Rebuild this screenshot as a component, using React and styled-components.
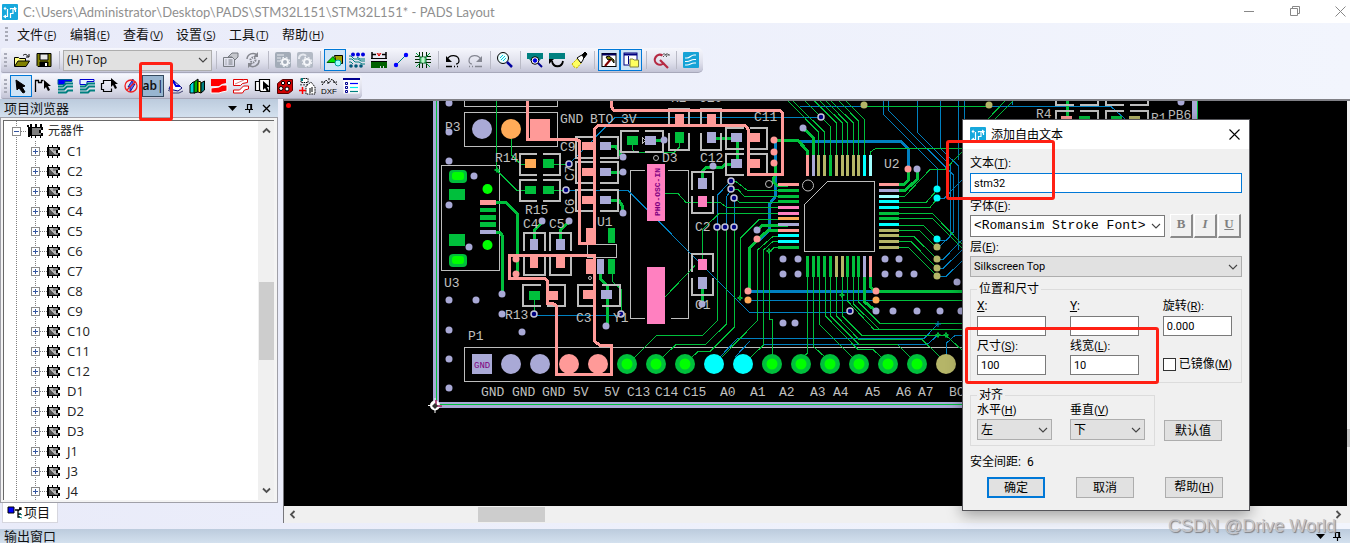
import React from "react";
import styled, { createGlobalStyle, css } from "styled-components";

const UI = `"Open Sans", "Noto Sans CJK SC", sans-serif`;
const DLG = `Roboto, "Noto Sans CJK SC", sans-serif`;

const Global = createGlobalStyle`
  * { box-sizing: border-box; }
  html, body { margin: 0; height: 100%; overflow: hidden; }
  body { font-family: ${UI}; color: #111; background: #ebeefa; }
  button, input, select { font: inherit; color: inherit; margin: 0; }
`;

const C = {
  green: "#00bf3c", lime: "#00ff00", lav: "#a9a9d6", pink: "#ff9a98", orange: "#ffab58",
  cyan: "#00ffff", ice: "#a0ffff", olive: "#b5b568", blue: "#0080c0", silk: "#bdbdbd",
  hot: "#ff80c0", purple: "#800080",
};

/* ---------- shell ---------- */
const App_ = styled.div`
  position: relative; display: flex; flex-direction: column;
  height: 100vh; min-width: 0; overflow: hidden;
  background: linear-gradient(90deg, #e9ebf9, #f2f5fd);
`;
const TitleBar = styled.header`
  flex: none; display: flex; align-items: center; height: 23px; background: #fff; padding: 0 0 0 2px;
`;
const TitleText = styled.h1`
  flex: 1; margin: 0 0 0 5px; font-family: Lato, sans-serif; font-size: 13px; line-height: 20px; font-weight: 400; color: #8f8f8f; white-space: nowrap;
`;
const WinButtons = styled.div`display: flex; gap: 26px; padding-right: 1px;`;
const Bare = styled.button`
  display: inline-flex; align-items: center; justify-content: center; padding: 0; border: 0; background: none;
  width: ${(p) => p.$w || 20}px; height: ${(p) => p.$h || 20}px;
`;
const MenuBar = styled.nav`
  flex: none; display: flex; align-items: center; height: 25px; padding: 0 0 3px 2px;
`;
const MenuItem = styled.button`
  border: 0; background: none; padding: 0; width: 53px; text-align: left; font-size: 13px; line-height: 20px; white-space: nowrap;
`;
const Key = styled.span`font-size: 11px; margin-left: 1px;`;
const Grip = styled.span`
  flex: none; width: 3px; height: 15px; margin: 0 ${(p) => p.$gap || 0}px 0 3px;
  background: repeating-linear-gradient(180deg, #a9abb8 0 2px, transparent 2px 4px);
`;
const ToolBar = styled.div`
  flex: none; align-self: flex-start; display: flex; align-items: center; height: 25px; margin-left: 1px;
  margin-bottom: ${(p) => p.$mb || 0}px; padding-right: ${(p) => p.$pr || 0}px;
  border-radius: 2px 5px 5px 2px; border-bottom: 1px solid #a7a8ba;
  background: linear-gradient(180deg, #f6f7fd, #dfe0ec 60%, #c3c4d6);
`;
const ToolBtn = styled.button`
  flex: none; display: flex; align-items: center; justify-content: center; width: 22px; height: 22px; padding: 0;
  border: 1px solid transparent; background: none;
  ${(p) => p.$on && css`border-color: #0078d7; background: #cfe4f6;`}
  ${(p) => p.$down && css`border-color: #35495e; background: #98b5d0;`}
`;
const Sep = styled.span`flex: none; width: 1px; height: 18px; margin: 0 3px 0 4px; background: #b9bac6;`;
const SelectBox = styled.span`
  position: relative; display: block; flex: none; width: ${(p) => p.$w || "100%"};
  > svg { position: absolute; right: 4px; top: 50%; margin-top: -3px; pointer-events: none; }
`;
const Select = styled.select`
  display: block; width: 100%; height: ${(p) => p.$h || 21}px; padding: 0 16px 0 3px; appearance: none; border-radius: 0;
  border: 1px solid ${(p) => (p.$white ? "#7a7a7a" : "#adadad")}; background: ${(p) => (p.$white ? "#fff" : "#e1e1e1")};
  font-size: ${(p) => p.$fs || 12}px; line-height: 18px; font-family: ${(p) => p.$ff || "inherit"}; outline: 0;
`;

/* ---------- work area ---------- */
const Work = styled.main`flex: 1; min-height: 0; display: flex; gap: 5px;`;
const Side = styled.aside`flex: none; width: 278px; display: flex; flex-direction: column; padding-bottom: 6px;`;
const PanelHead = styled.div`
  flex: none; display: flex; align-items: center; height: ${(p) => p.$h || 18}px; padding: 0 4px;
  background: linear-gradient(180deg, #bccbdd, #d3e0ee); overflow: hidden;
`;
const PanelTitle = styled.h2`flex: 1; margin: 0; font-size: 13px; line-height: 14px; font-weight: 400;`;
const TreeFrame = styled.div`
  flex: 1; min-height: 0; display: flex; padding: 2px 3px 2px 2px; border: 1px solid #a0a0a8; background: #f4f4f4;
`;
const TreeInner = styled.div`
  flex: 1; min-height: 0; display: flex; border-top: 1px solid #696969; border-left: 1px solid #696969; background: #fff;
`;
const Tree = styled.ul`
  flex: 1; min-height: 0; overflow: hidden; margin: 0; padding: 0 0 0 5px; list-style: none; font-size: 12px;
`;
const Row = styled.li`display: flex; align-items: center; height: 20px; color: #222;`;
const Caption = styled.span`margin-left: ${(p) => p.$ml}px; line-height: 18px; font-size: ${(p) => p.$fs}px;`;
const Expander = styled.button`display: block; border: 0; padding: 0; background: none; height: 20px;`;
const VScroll = styled.div`
  flex: none; width: 16px; display: flex; flex-direction: column; justify-content: space-between; align-items: center;
  background: #f0f0f0; padding: 5px 0 5px;
`;
const VThumb = styled.div`width: 15px; height: 78px; margin-top: 20px; background: #cdcdcd;`;
const Tab = styled.button`
  align-self: flex-start; display: flex; align-items: center; gap: 1px; height: 20px; margin: 0 0 0 2px; padding: 0 7px 2px 4px;
  border: 1px solid #d6d6de; border-top: 0; background: #fff; font-size: 13px; line-height: 16px;
`;
const CanvasPane = styled.section`
  flex: 1; min-width: 0; display: flex; flex-direction: column; margin-bottom: 6px;
  border-top: 2px solid #808086; border-left: 1px solid #77777c;
`;
const CanvasRow = styled.div`flex: 1; min-height: 0; display: flex; background: #f0f0f0;`;
const BoardView = styled.div`flex: 1; min-width: 0; overflow: hidden; background: #000; > svg { display: block; }`;
const EdgeScroll = styled.div`
  flex: none; width: 3px; padding-top: 328px; background: #f0f0f0; &::before { content: ""; display: block; height: 18px; background: #c8c8c8; }
`;
const HScroll = styled.div`
  flex: none; height: 17px; display: flex; align-items: center; justify-content: space-between; padding: 0 7px 0 4px; background: #f0f0f0;
`;
const HTrack = styled.div`flex: 1; padding-left: 181px; > div { width: 67px; height: 15px; background: #cdcdcd; }`;

/* ---------- dialog ---------- */
const Dialog = styled.div`
  position: absolute; left: 962px; top: 119px; width: 288px; border: 1px solid #55555a; background: #f0f0f0;
  box-shadow: 0 4px 14px rgba(0,0,0,.35); font-family: ${DLG}; font-size: 12px; line-height: 14px; color: #000;
`;
const DialogHead = styled.div`display: flex; align-items: center; height: 29px; padding: 0 5px 0 7px; background: #fff;`;
const DialogTitle = styled.h2`flex: 1; margin: 0 0 0 5px; font-size: 12px; line-height: 16px; font-weight: 400;`;
const Form = styled.form`padding: 7px 7px 12px;`;
const Label = styled.label`display: block; height: 14px; white-space: nowrap; font-size: 12px; line-height: 14px; margin-bottom: ${(p) => p.$mb}px;`;
const DKey = styled.span`font-size: 11px;`;
const Field = styled.input`
  display: block; width: 100%; height: 20px; padding: 0 3px; border: 1px solid ${(p) => (p.$focus ? "#0078d7" : "#7a7a7a")};
  background: #fff; font-size: 11px; line-height: 16px; outline: 0; border-radius: 0;
`;
const Gap = styled.div`margin-bottom: ${(p) => p.$b}px;`;
const FontRow = styled.div`display: flex; align-items: center; gap: 5px; height: 25px; margin-bottom: 2px;`;
const StyleBtns = styled.div`display: flex; gap: 1px;`;
const StyleBtn = styled.button`
  width: 23px; height: 24px; padding: 0 0 3px; border: 1px solid #fff; border-right: 2px solid #8a8a8a; border-bottom: 2px solid #8a8a8a;
  background: #f0f0f0; color: #808080; font: bold 13px "Liberation Serif", serif;
  font-style: ${(p) => (p.$i ? "italic" : "normal")}; text-decoration: ${(p) => (p.$u ? "underline" : "none")};
`;
const Group = styled.fieldset`
  min-width: 0; margin: 0; padding: ${(p) => p.$pad}; border: 1px solid #dcdcdc; width: ${(p) => p.$w || "auto"};
`;
const Legend = styled.legend`padding: 0 2px; margin-left: 0; height: 14px; line-height: 14px; font-size: 12px;`;
const Grid = styled.div`display: grid; grid-template-columns: ${(p) => p.$cols}; column-gap: ${(p) => p.$g}px; row-gap: 3px;`;
const Check = styled.label`display: flex; align-items: center; gap: 3px; height: 14px; margin-top: 18px; white-space: nowrap;`;
const Tick = styled.input`
  appearance: none; flex: none; width: 13px; height: 13px; margin: 0; border: 1px solid #333; background: #fff;
`;
const AlignRow = styled.div`display: flex; align-items: flex-end; gap: 9px; margin-top: 5px;`;
const DlgBtn = styled.button`
  width: 58px; height: 21px; padding: 0; border: ${(p) => (p.$def ? "2px solid #0078d7" : "1px solid #adadad")};
  background: #e1e1e1; font-size: 12px; line-height: 14px; margin-bottom: ${(p) => p.$mb || 0}px;
`;
const Clearance = styled.p`margin: 9px 0 8px; line-height: 14px; > span { margin-left: 6px; }`;
const Footer = styled.div`display: flex; gap: 31px; padding-left: 17px;`;
const RedBox = styled.div`
  position: absolute; left: ${(p) => p.$x}px; top: ${(p) => p.$y}px; width: ${(p) => p.$w}px; height: ${(p) => p.$h}px;
  border: 3px solid #ff2014; border-radius: 3px; pointer-events: none;
`;
const Watermark = styled.div`
  position: absolute; right: 14px; bottom: 6px; font: 18px/22px "Liberation Sans", sans-serif; color: #c4c4c8;
  text-shadow: 1px 1px 1px #808084; white-space: nowrap;
`;

/* ---------- icons ---------- */
const Chevron = ({ c = "#444" }) => (
  <svg width="10" height="6" viewBox="0 0 10 6"><path d="M1 1l4 4 4-4" fill="none" stroke={c} strokeWidth="1.1" /></svg>
);
const Arrow = ({ r = 0 }) => (
  <svg width="9" height="9" viewBox="0 0 9 9"><path d="M1 6.5L4.5 3 8 6.5" fill="none" stroke="#505050" strokeWidth="1.8" transform={`rotate(${r} 4.500 4.500)`} /></svg>
);
const Logo = () => (
  <svg width="16" height="16" viewBox="0 0 16 16">
    <rect width="16" height="16" rx="1" fill="#16a8dc" />
    <path d="M2 12.500H5.500V5M4.500 4.500H2.500M8.500 14V9.500H11V5M8.500 5.500V4.500H13.500V8" fill="none" stroke="#fff" strokeWidth="1.200" />
    <path d="M12 2.500l3 2-3 2zM3.500 2.500L1.500 4.500l2 2zM4 10.500l-3 2 3 2z" fill="#fff" />
  </svg>
);
const I = ({ children, w = 18, h = 18 }) => (
  <svg width={w} height={h} viewBox={`0 0 ${w} ${h}`} fill="none" stroke="#000" strokeWidth="1">{children}</svg>
);
const cursor = (x, y) => (
  <path d={`M${x} ${y}v9l2-2 2 4 2-1-2-4h3z`} fill="#000" stroke="none" />
);
const icons = {
  open: <I><path d="M1.500 15V6.500h4l1 1h6V10" fill="#ffff80" /><path d="M1.500 15.500L5 10h11.500L13 15.500z" fill="#808000" /><path d="M10 4.500c2-2 4-1 5 1M13 6h3V3" /></I>,
  save: <I><path d="M2 2.500h14v13H3l-1-1z" fill="#808000" /><path d="M5 3h8v6H5z" fill="#e8e8e8" /><path d="M5 11h8v4H5z" fill="#000" /><path d="M10 12h2v3h-2z" fill="#fff" stroke="none" /></I>,
  props: <I><path d="M1.500 6.500h11v9h-11zM3.500 9h1m2 0h4m-7 2h1m2 0h4m-7 2h1m2 0h4" stroke="#777b82" /><path d="M6 6l4-4h6v4l-3 3-3-3z" fill="#c5c7cd" stroke="#777b82" /></I>,
  cycle: <I><path d="M3 8a6 6 0 0 1 10-4M15 9a6 6 0 0 1-10 5" stroke="#85878f" strokeWidth="1.500" /><path d="M14 1v5H9zM4 17v-5h5z" fill="#85878f" stroke="none" /><circle cx="9" cy="9" r="2.500" stroke="#85878f" strokeDasharray="1.500 1" strokeWidth="2" /></I>,
  gear1: <I><rect x="1" y="1" width="16" height="16" rx="2" fill="#a3acb8" stroke="none" /><path d="M3 4h7M3 7h4M3 10h3" stroke="#e6e9ef" /><circle cx="11" cy="11" r="3" stroke="#f5f7fa" strokeWidth="2" /><circle cx="11" cy="11" r="4.800" stroke="#f5f7fa" strokeDasharray="2 1.800" /></I>,
  gear2: <I><rect x="1" y="1" width="16" height="16" rx="2" fill="#b3bac5" stroke="none" /><path d="M3 8a4 4 0 0 1 7-3" stroke="#e6e9ef" strokeWidth="2" /><circle cx="11" cy="11" r="3" stroke="#f5f7fa" strokeWidth="2" /><circle cx="11" cy="11" r="4.800" stroke="#f5f7fa" strokeDasharray="2 1.800" /></I>,
  shapes: <I><path d="M8.500 4.500h8v8h-6z" fill="#a0a000" /><path d="M1 11.500l6-6 4 6z" fill="#00e000" stroke="#006000" /><circle cx="12" cy="12" r="3" fill="#a0ffff" stroke="#00a0a0" /></I>,
  dots: <I>{[5, 10, 15].map((x) => <g key={x} fill="#0000e0" stroke="none"><circle cx={x} cy="3.500" r="2" /><circle cx={x - 2} cy="15" r="1.800" fill="#005878" /></g>)}<path d="M1 5h2l3 3h4l3 2h4M1 8h3l3 3h4l3 2h3M1 11h2l2 2M9 6l3 2h5" stroke="#008080" /></I>,
  ratsnest: <I><path d="M2 1v7M16 1v7M2 3.500h4m6 0h4" strokeWidth="1.500" /><path d="M7 2l2 3 2-3M9 2v3" stroke="#e00000" /><path d="M1 7.500h16" /><path d="M1 11h16v6h-3v-2h-1v2h-2v-2h-1v2H1z" fill="#006000" stroke="none" /><path d="M1 10.500h16" /></I>,
  link: <I><path d="M4 14L14 4" stroke="#008080" /><circle cx="4" cy="14" r="2.200" fill="#0000ff" stroke="none" /><circle cx="14" cy="4" r="2.200" fill="#0000ff" stroke="none" /></I>,
  chip: <I><path d="M1 5.500h5m6 0h5M1 8.500h5m6 0h5M1 11.500h5m6 0h5M5.500 1v5m3-5v5m4-5v5M5.500 12v5m3-5v5m4-5v5" stroke="#002800" /><path d="M2 2l5 5m9-5l-5 5M2 16l5-5m9 5l-5-5" stroke="#00a040" /><path d="M6 6h6v6H6z" fill="#80e8a0" stroke="#006020" /><path d="M9 6v6" stroke="#fff" /></I>,
  undo: <I><path d="M3 9c2-6 12-6 12 1 0 2-2 3-3 3" strokeWidth="1.200" /><path d="M2 5v6h6z" fill="#000" stroke="none" /><path d="M2 15.500h6m2 0h1m2 0h1" strokeWidth="1.500" /></I>,
  redo: <I><path d="M15 9C13 3 3 3 3 10c0 2 2 3 3 3" stroke="#858792" strokeWidth="1.200" /><path d="M16 5v6h-6z" fill="#858792" stroke="none" /><path d="M9 15.500h7m-9 0H6m-2 0H3" stroke="#858792" strokeWidth="1.500" /></I>,
  zoom: <I><circle cx="7" cy="7" r="5.500" fill="#e8ffff" /><path d="M4 7l3-3m-2 5l4-4m-2 5l3-3" stroke="#00c8e0" /><path d="M11 11l5 5" stroke="#0000a0" strokeWidth="2.500" /></I>,
  find: <I><path d="M1 2h16v6h-2l-2 2-4-4-4 4-2-2H1z" fill="#008080" stroke="none" /><circle cx="9" cy="9.500" r="3.800" fill="#fff" /><circle cx="9" cy="9.500" r="1.800" fill="#0000e0" stroke="#0000e0" /><path d="M12 12l4 4" stroke="#000090" strokeWidth="2" /></I>,
  flip: <I><path d="M1 2h16v6H1z" fill="#008080" stroke="none" /><path d="M4 10c1 7 10 7 11 0" strokeWidth="1.800" /><path d="M1 13V8h5z" fill="#000" stroke="none" /></I>,
  brush: <I><path d="M2 13l6-6 4 4-5 6-3-1z" fill="#ffff60" stroke="#c0b000" strokeDasharray="2 1" /><path d="M7 7l4 5 2-3 1-3 3-3-2-2-3 3-2 1z" fill="#fff" /><path d="M12 4l3-3 2 2-3 4z" fill="#000" /></I>,
  hammer: <I><rect x="2" y="2.500" width="14" height="13" fill="#fff" /><path d="M2 3.500h14" stroke="#000060" strokeWidth="2" /><path d="M5 15l6-7" stroke="#800000" strokeWidth="2" /><path d="M6 6l3-1 5 4v3l-3-4-3 1z" fill="#808000" /></I>,
  windows: <I><rect x="2" y="2" width="13" height="12" fill="#fff" stroke="#000080" /><path d="M2 3.500h13" stroke="#000080" strokeWidth="2" /><path d="M6.500 5v8" stroke="#000080" /><path d="M8 10v-2h3l1 1h4.500v7H8z" fill="#ffff60" stroke="#808040" /></I>,
  q: <I><path d="M10.500 4.500a5 5 0 1 0 1.500 7M8 9l8 8" stroke="#b52a43" strokeWidth="2.200" /><path d="M11 6l3-3m-3 0h3v3m0 0l3-3m-3 0h3v3" stroke="#555" strokeDasharray="2 1" /></I>,
  waves: <I><rect x="1" y="1" width="16" height="16" rx="1" fill="#16a3d6" stroke="none" /><path d="M3 7h2c3 0 4-3 7-3h2M3 10.500h2c3 0 4-2 7-2h2M3 14h2c3 0 4-2 7-2h2" stroke="#fff" strokeWidth="1.200" /></I>,
  arrow: <I><path d="M4 3l9 6-3 1 3 5-2 1-4-5-2 2z" fill="#000" /></I>,
  poly: <I><path d="M1.500 15V3.500h3v2h3v-2h2" strokeWidth="1.300" />{cursor(10, 3)}</I>,
  copper: <I><path d="M2 2.500h14v2H9v3H2z" fill="#0000ff" stroke="#006090" /><path d="M2 9.500h5l3-3h7m-15 6h6l3-3h6m-15 6h8l2-2h5" stroke="#008080" strokeWidth="2" /></I>,
  copper2: <I><path d="M2 2.500h14v2H9v3H2z" fill="#e8f4ff" stroke="#0000d0" /><path d="M2 9.500h5l3-3h7m-15 6h6l3-3h6m-15 6h8l2-2h5" stroke="#008080" strokeWidth="2" /></I>,
  sel: <I><path d="M11 3.500H3.500v3h-2v6h2v2h8v-3" strokeWidth="1.200" />{cursor(11, 1)}</I>,
  ban: <I><path d="M11 2v5h2l-5 8V10H6z" fill="#5566ff" stroke="#000080" strokeWidth=".8" /><circle cx="9" cy="9" r="6" stroke="#f02020" strokeWidth="1.300" /><path d="M5 13l8-8" stroke="#f02020" strokeWidth="1.300" /></I>,
  plane: <I><path d="M3 12l4-9 9 8-4 3z" fill="#fff" stroke="#000080" /><path d="M7 4l3 5h4" stroke="#0000e0" strokeWidth="2" /><path d="M2 13l5 3h6l4-2" stroke="#404070" /></I>,
  books: <I><path d="M2 8l3-3h2v11H2z" fill="#00d8d8" /><path d="M6 5l4-3v13l-4 1z" fill="#00b000" /><path d="M10 4l3 1v11l-3-1z" fill="#ffff00" /><path d="M13 6l3.500-2v9L13 16z" fill="#008080" /></I>,
  flood: <I><path d="M1 2h15v4l-4 1-3 2H1z" fill="#f00" stroke="none" /><path d="M1 16v-5l8-1 3-2h5v6l-5 1-3 1z" fill="#f00" stroke="#fff" /></I>,
  hatch: <I><path d="M1.500 2.500h14v3l-5 1-2 2h-7zM1.500 16v-3h6l4-4h5v3l-4 1-2 3z" fill="#fff" stroke="#e00000" /><path d="M3 7l9-4" stroke="#e08080" /></I>,
  area: <I><path d="M5 4.500H1.500v9H6M5.500 2.500h10v12h-9l-1-2z" fill="#fff" strokeWidth="1.200" />{cursor(9, 4)}</I>,
  conn: <I><path d="M1.500 6.500l5-4h10v11l-4 3h-11z" fill="#d00000" stroke="#500" /><g fill="#fff"><circle cx="5" cy="11.500" r="2" /><circle cx="11" cy="12" r="2" /><circle cx="7" cy="6" r="1.700" /><circle cx="13" cy="6" r="1.700" /></g></I>,
  nudge: <I><path d="M3 1.500h7v4H3zM3 7v2m3-2v2m3-2v2M8 17V9l5-4 4 5v7z" fill="#fff" strokeDasharray="1.500 .800" /><path d="M4 1v3" stroke="#008080" strokeWidth="2" /><path d="M4.500 10v7M1 13.500h7" stroke="#f00" strokeWidth="1.500" /><path d="M12 11v5m2-6v5" /></I>,
  dxf: <I><path d="M2 8l4-5 3 3 3-4 5 6M9 1v3M1 5h4m2 1h3m3-1h4" strokeDasharray="2 .800" /><text x="1" y="17" fontSize="8" fontFamily="Liberation Sans" stroke="none" fill="#000">DXF</text></I>,
  list: <I><rect x="1.500" y="1.500" width="16" height="15" fill="#fff" stroke="none" /><path d="M1 2h17" stroke="#000090" strokeWidth="2" /><path d="M3.500 5.500h2v2h-2zm0 4h2v2h-2zm0 4h2v2h-2z" stroke="#000090" /><path d="M8 6.500h8" stroke="#00f" strokeWidth="1.200" /><path d="M8 10.500h8" stroke="#0ee" strokeWidth="1.200" /><path d="M8 14.500h8" stroke="#008080" strokeWidth="1.200" /></I>,
};
const Tool = ({ n, on, down }) => (
  <ToolBtn type="button" $on={on} $down={down} aria-label={n}>{icons[n]}</ToolBtn>
);
const AbTool = styled.span`font: 600 12px/20px "Noto Sans", sans-serif; > i { font-style: normal; font-weight: 400; }`;

const ChipIcon = ({ big }) => (
  <svg width={big ? 17 : 14} height={big ? 14 : 13} viewBox={big ? "0 0 17 14" : "0 0 14 13"} shapeRendering="crispEdges">
    {big && <path d="M0 1h2v2h13v2H3v8H1V3H0zM3 0h2v3H3zM8 0h2v3H8zM13 0h2v3h-2z" fill="#000" />}
    <g transform={big ? "translate(3 1)" : ""}>
      <path d="M0 2h13v3h-2v3h2v3H0z" fill="#000" />
      <path d="M1 0h1v2H1zM5 0h1v2H5zM10 0h1v2h-1zM1 11h1v2H1zM5 11h1v2H5zM10 11h1v2h-1z" fill="#000" />
      <path d="M2 3h9v2H9v3h2v2H2z" fill="#808080" />
      {!big && <path d="M2 4l7 6h2v0H2z" fill="#505050" />}
      {!big && <path d="M3 3h3v3h3v3H7L3 5z" fill="#b4b4b4" />}
    </g>
  </svg>
);
const Node = ({ root }) => (
  <svg width={root ? 18 : 38} height="20" viewBox={root ? "0 0 18 20" : "0 0 38 20"} shapeRendering="crispEdges">
    <path d={root ? "M7.500 0V20M12 10.500H18" : "M7.500 0V20M26.500 0V20M31 10.500H38"} stroke="#808080" strokeDasharray="1 1" />
    <rect x={root ? 3.500 : 22.500} y="6.500" width="8" height="8" fill="#fff" stroke="#8b8b8b" />
    <path d={root ? "M5 10.500h5" : "M24 10.500h5M26.500 8v5"} stroke="#3555a0" />
  </svg>
);
const HeadIcons = ({ close }) => (
  <>
    <Bare $w={17} $h={16} aria-label="options"><svg width="9" height="5"><path d="M0 0h9L4.500 5z" fill="#000" /></svg></Bare>
    <Bare $w={17} $h={16} aria-label="pin"><svg width="9" height="10" fill="none" stroke="#000"><path d="M2.500 6V1.500h4V6M0 6.500h8M4.500 7v3" strokeWidth="1.200" /><path d="M6 1v5" strokeWidth="1.500" /></svg></Bare>
    {close && <Bare $w={16} $h={16} aria-label="close"><svg width="9" height="9"><path d="M1 1l7 7M8 1L1 8" stroke="#000" strokeWidth="1.300" /></svg></Bare>}
  </>
);

/* ---------- circuit board ---------- */
const T = ({ d, w = 1, c = C.green }) => <path d={d} stroke={c} strokeWidth={w} fill="none" strokeLinejoin="round" />;
const Dots = ({ at, c = C.lav, r = 3.5 }) => at.map(([x, y]) => <circle key={`${x},${y}`} cx={x} cy={y} r={r} fill={c} />);
const Pads = ({ at, c }) => at.map(([x, y, w, h]) => <rect key={`${x},${y}`} x={x} y={y} width={w} height={h} fill={c} />);
const Vias = ({ at }) => at.map(([x, y]) => (
  <circle key={`${x},${y}`} cx={x} cy={y} r="3" fill="#000080" stroke="#c4c4d8" strokeWidth="1.500" />
));
const Part = ({ x, y, w = 42, h = 21, v }) => {
  const x2 = x + w, y2 = y + h, mx = x + w / 2, my = y + h / 2;
  const d = v
    ? `M${x} ${my - 3}V${y}H${x2}V${my - 3}M${x} ${my + 3}V${y2}H${x2}V${my + 3}`
    : `M${mx - 3} ${y}H${x}V${y2}H${mx - 3}M${mx + 3} ${y}H${x2}V${y2}H${mx + 3}`;
  return <path d={d} fill="none" stroke={C.silk} strokeWidth="2.500" />;
};
const pinX = [807, 813, 818, 824, 830, 836, 842, 847, 853, 858, 864, 870];
const pinY = [184, 190, 196, 201, 207, 213, 218, 224, 230, 235, 241, 247];
const { pink: P, lav: L, olive: O, green: G, cyan: Y, ice: E, hot: H, orange: R } = C;
const pinsTop = [P, L, O, O, G, O, O, O, O, O, Y, E];
const pinsBottom = [G, G, G, G, G, O, O, G, G, G, L, P];
const pinsLeft = [P, G, G, G, H, H, R, L, P, Y, Y, G];
const pinsRight = [P, L, E, Y, Y, G, G, Y, O, O, O, O];
const header = [null, L, L, P, P, G, G, G, Y, Y, G, G, G, G, G, G, O];
const names = [
  ["GND", 560, 123], ["BTO", 590, 123], ["3V", 621, 123], ["P3", 445, 131], ["R14", 495, 162], ["C9", 560, 151], ["R15", 525, 214],
  ["C4", 523, 228], ["C5", 549, 228], ["U1", 597, 226], ["D3", 662, 162], ["C12", 700, 162], ["C11", 754, 121], ["C2", 695, 231],
  ["U2", 884, 168], ["U3", 444, 287], ["R13", 505, 319], ["C3", 576, 322], ["Y1", 613, 322], ["P1", 468, 340], ["C1", 695, 309],
  ["R2", 671, 102], ["C10", 699, 102], ["R4", 1036, 118], ["PB6", 1168, 119], ["R1", 1151, 122],
  ["GND", 481, 396], ["GND", 512, 396], ["GND", 542, 396], ["5V", 573, 396], ["5V", 604, 396], ["C13", 627, 396], ["C14", 655, 396],
  ["C15", 683, 396], ["A0", 720, 396], ["A1", 750, 396], ["A2", 779, 396], ["A3", 810, 396], ["A4", 833, 396], ["A5", 865, 396],
  ["A6", 896, 396], ["A7", 918, 396], ["BC", 949, 396],
];
const Board = () => (
  <svg width="1063" height="405" viewBox="284 101 1063 405">
    <circle cx="288.500" cy="105.500" r="2.500" fill="#f00" />
    <g shapeRendering="crispEdges">
      {/* board edge */}
      <path d="M436 101V405H1195V101" fill="none" stroke={L} strokeWidth="6" />
      <path d="M436.500 101V404.500H1197.500V101" fill="none" stroke={G} strokeWidth="1.500" />
      {/* component outlines */}
      <g fill="none" stroke={C.silk}>
        <path d="M464.500 101V106.500H557.500V101M464.500 112.500H557.500V146.500H464.500zM441.500 165.500H499.500V270.500H441.500z" />
        <path d="M587.500 244.500H616.500V257.500H587.500zM645 170.500H630.500V318.500H645M668 170.500H688.500V318.500H671" />
        <path d="M464.500 347.500H1190V381.500H464.500z" />
        <path d="M827.500 181.500H874.500V251.500H804.500V204.500z" />
        <path d="M642 137v7l4-3.500z" />
      </g>
      {/* bottom layer */}
      <g>
        <T c={C.blue} d="M569 164L615 117.500H818M566 190.500H628L749.500 312.500H848M534 315.500H621M731 181L717.500 195V227M731 190L726.500 197V227M734.500 199V227M800 106.500H864M989 106.500H1111L1125 119" />
        <T c={C.blue} d="M883.500 101V114.500L937.500 168.500V188M888.500 101V110.500L953.500 175V232L946 240H937M917.500 101V132.500L950.500 165.500V236L938 248M940.500 101V148.500L958.500 166V250M958.500 101V160M964.500 101V119M1012 101V105M937 259.500H943L962 240M937 268.500H943L962 250M937 276.500H946L962 261M937 198.500H944L962 180" />
        <T c={C.blue} d="M720 357L737.500 338.500H924L938 324M735 357L750 341M763.500 344.500H927L938 335M946.500 356V343L955 335.500H962M748 300.500H876" />
        <T c={C.blue} w={3} d="M798 141.500H901L908.500 149V169M775 141V197L769.500 204V230L759 240M748 291.500H876" />
      </g>
      {/* top layer, thin */}
      <T d="M496.500 101V170L517 190.500H525M554 164.500H569M554 190.500H566M534.500 300V314M612 274V281L621.500 290V314M632 145V149L636 152.500H674L679.500 147V142M665 193.500H678L686 202.500H720L727 207.500H778M665 297L695 265.500" />
      <T d="M511.500 139V155L521 164.500H527" />
      <T d="M731 181.500H736L747.500 190.500H779M731 189.500H738L744.500 196.500H779M734.500 198.500L740 202.500H779M778 219.500H759L740.500 238V298M778 213.500H719L702.500 229.500V260" />
      <T d="M717.500 230V320.500L702.500 335.500H656.500L633 359M726.500 230V324L705.500 344.500H676L662 358M734.500 230V327L710 351.500H698L690 359M778 236.500H773L757.500 250V320.500L722 357M778 241.500H773L763.500 250V345L750 358M778 247.500H774L769.500 252V319L772.500 320V355" />
      <T d="M818.500 155V132L788 101M824.500 155V132L793 101M830.500 155V126.500L805 101M836.500 155V123L814.500 101M842.500 155V123L820 101M847.500 155V123L826 101M853.500 155V123L831 101M858.500 155V121L839 101M864.500 155V119.500L846 101M864 106.500H989M870.500 155V152L875.500 148.500H962M988 119L1005 101M995 119L1013 101" />
      <T d="M899 196.500H904.500L930 169.500H945L962 152M899 202.500H926L937 190M899 207.500H930L937 199M899 213.500H932.500L962 244M899 218.500H932.500L962 248M899 225.500H923.500L937 239M899 230.500H919.500L936 247M899 236.500H914L937 259M899 241.500H911L937 268M899 247.500H908.500L937 276" />
      <T d="M807.500 277V353L802 358M813.500 277V346.500L826 358M819.500 277V324.500L853 358M825.500 277V316L858 349.500H873L882 358M830.500 277V316L859 344.500H897.500L911 358M836.500 277V316L859 339.500H922L941 358M842.500 277V316L862 335.500H946L962 350M847.500 277V301L874 329.500H962M853.500 277V304L879.500 329.500M858.500 277V302L880 323.500H962M876 300.500H962" />
      {/* top layer, wide */}
      <T w={3} d="M496 202.500H506L517.500 214V274M496 232.500H500L502.500 236V294M611 146.500H616L622 157M611 172.500H623M611 200.500H619L622.500 206V213M534.500 239V230L542 222M560.500 239V230L569 222M600.500 274V279L607 285.500V326M654 140.500H664M716 138.500H733M737.500 142V160M732 164.500H725L722 167.500H706L702.500 171V178M775 140.500H798L807.500 151V155M804 129L813.500 138V155M775 163V176L773 179V182L777 185.500H788M757 230.500L762 225.500H788M757 240L768 230.500H778M757 240L749.500 248V291M908.500 170V180L904 184.500H892M917.500 170V179L905 190.500H899M702.500 289V304M864.500 277V302L876 311M870.500 277V287L876 291.500H962M1067.500 101V118" />
      {/* silkscreen brackets */}
      <Part x={520} y={154} w={40} /><Part x={520} y={180} w={40} />
      <Part x={576} y={137} /><Part x={576} y={162} /><Part x={576} y={190} />
      <Part x={524} y={233} w={21} h={42} v /><Part x={550} y={233} w={21} h={42} v />
      <Part x={523} y={285} /><Part x={578} y={285} /><Part x={621} y={131} />
      <Part x={669} y={109} w={20} h={41} v /><Part x={701} y={109} w={20} h={41} v />
      <Part x={726} y={128} w={41} /><Part x={726} y={154} w={41} />
      <Part x={692} y={172} w={21} h={41} v /><Part x={692} y={254} w={21} h={41} v />
      <Part x={1056} y={84} /><Part x={1106} y={84} /><Part x={1056} y={111} /><Part x={1106} y={111} />
      {/* pads */}
      <Pads c={P} at={[[530, 119, 20, 20], [582, 142, 11, 8], [582, 168, 11, 8], [582, 196, 11, 8], [480, 200, 16, 5], [530, 256, 8, 12], [556, 256, 9, 12], [586, 228, 10, 16], [586, 259, 10, 15], [547, 291, 11, 9], [583, 290, 11, 9], [675, 114, 9, 10], [707, 114, 9, 10], [748, 133, 12, 9], [748, 159, 12, 9], [1061, 116, 11, 8]]} />
      <Pads c={G} at={[[449, 189, 16, 11], [449, 234, 16, 12], [480, 208, 16, 4], [480, 215, 16, 5], [480, 222, 16, 5], [543, 159, 11, 9], [525, 186, 11, 8], [543, 186, 11, 8], [608, 228, 7, 15], [608, 259, 7, 15], [529, 291, 11, 9], [627, 136, 11, 9], [675, 132, 9, 11], [1079, 116, 11, 8], [1111, 116, 11, 8]]} />
      <Pads c={L} at={[[472, 354, 20, 20], [480, 230, 16, 4], [600, 142, 11, 8], [600, 168, 11, 8], [600, 196, 11, 8], [530, 239, 8, 11], [556, 239, 9, 11], [597, 259, 7, 15], [601, 290, 11, 9], [645, 136, 11, 9], [707, 132, 9, 11], [731, 133, 11, 9], [731, 159, 11, 9], [698, 178, 9, 11], [698, 277, 9, 12]]} />
      <Pads c={R} at={[[525, 159, 11, 9]]} />
      <Pads c={O} at={[[1129, 116, 11, 8]]} />
      <Pads c={H} at={[[647, 164, 18, 57], [647, 267, 18, 57], [698, 196, 9, 11], [698, 259, 9, 11]]} />
      {pinX.map((x, i) => <g key={x}><rect x={x - 1} y="155" width="3" height="21" fill={pinsTop[i]} /><rect x={x - 1} y="256" width="3" height="21" fill={pinsBottom[i]} /></g>)}
      {pinY.map((y, i) => <g key={y}><rect x="778" y={y - 1} width="21" height="3" fill={pinsLeft[i]} /><rect x="879" y={y - 1} width="20" height="3" fill={pinsRight[i]} /></g>)}
      {/* power outline */}
      <T c={P} w={3} d="M611.500 101V107L614 110.500H780L782.500 113V174.500H748V129L745 125.500H598L594.500 129V243.500H579.500V141L577 139.500H527.500V101" />
      <T c={P} w={3} d="M509.500 255.500H594.500V341L600 345.500H611.500V374.500H556.500V306L553 303.500H547.500V281L545 278.500H509.500V254" />
    </g>
    {[170, 254].map((y) => <g key={y}><rect x="449" y={y} width="18" height="13" rx="4" fill={G} /><rect x="452" y={y + 2} width="12" height="8" rx="3" fill={C.lime} /></g>)}
    <Dots c={C.lime} r={5} at={[[487.5, 189], [487.5, 245]]} />
    <Dots r={10} at={[[482, 129]]} /><Dots r={10} c={R} at={[[511, 129]]} />
    {header.map((c, i) => c && (
      <g key={i}><circle cx={482 + i * 29} cy="364" r="10" fill={c} />{c === G && <circle cx={482 + i * 29} cy="364" r="5.500" fill={C.lime} />}</g>
    ))}
    <Dots at={[[449, 103], [449, 132], [449, 161], [449, 205], [474, 176], [469, 247], [449, 300], [476, 300], [449, 330], [522, 332], [449, 359], [449, 388], [502, 294], [502, 314], [542, 221], [569, 221], [623, 157], [623, 172], [623, 213], [606, 326], [664, 140], [713, 166], [702, 304], [803, 128], [757, 230], [917, 169]]} />
    <Dots at={[[783, 259], [798, 259], [783, 274], [798, 274], [885, 259], [899, 259], [885, 274], [899, 274], [914, 274], [957, 282], [783, 323], [795, 323], [876, 311], [893, 311], [917, 311], [940, 311], [961, 311], [1181, 102]]} />
    <Dots c={P} at={[[516, 259], [516, 274], [774, 140], [774, 152], [774, 163], [757, 239], [908, 169], [748, 291], [876, 291]]} />
    <Dots c={R} at={[[748, 300], [876, 300]]} />
    <Dots c={Y} at={[[937, 189], [937, 198], [937, 239]]} />
    <Dots c={O} at={[[864, 105], [989, 105], [937, 247], [937, 259], [937, 268], [937, 276]]} />
    <Vias at={[[569, 164], [566, 190], [621, 314], [534, 314], [731, 181], [731, 189], [734, 198], [717, 227], [725, 227], [734, 227], [821, 117], [850, 311]]} />
    <g fill="none" stroke={C.silk}><circle cx="808" cy="185.500" r="5.500" /><circle cx="769" cy="184" r="3.500" /><circle cx="656" cy="158" r="2.500" /><circle cx="590" cy="278" r="1.500" /></g>
    <g fill="none" stroke={G}>{[[497, 170], [740, 298], [842, 295], [769, 251], [938, 335], [946, 335]].map(([x, y]) => <path key={x} d={`M${x - 3} ${y}h6M${x} ${y - 3}v6M${x - 2} ${y}l2-2 2 2-2 2z`} />)}</g>
    <path d="M938 321v6M935 324h6" stroke={C.blue} />
    <g fontFamily="Liberation Mono, monospace" fontSize="13" fill="#c0c0c0">
      {names.map(([t, x, y]) => <text key={`${t}${x}`} x={x} y={y}>{t}</text>)}
      <text transform="translate(574 181) rotate(-90)">C7</text>
      <text transform="translate(574 214) rotate(-90)">C6</text>
    </g>
    <g fontFamily="Liberation Mono, monospace" fill={C.purple}>
      <text transform="translate(660 216) rotate(-90)" fontSize="8" fontWeight="700">PHO-OSC-IN</text>
      <text x="474" y="368" fontSize="9">GND</text>
    </g>
    <circle cx="435" cy="405.500" r="5" fill="#fff" /><path d="M435 398v15M428 405.500h14" stroke="#fff" /><path d="M436 400v6h6" fill="none" stroke="#a02060" strokeWidth="1.500" /><path d="M432 406l3-3 3 3-3 3z" fill="#333" />
  </svg>
);

/* ---------- composition ---------- */
const menus = [["文件", "F"], ["编辑", "E"], ["查看", "V"], ["设置", "S"], ["工具", "T"], ["帮助", "H"]];
const parts = ["C1", "C2", "C3", "C4", "C5", "C6", "C7", "C8", "C9", "C10", "C11", "C12", "D1", "D2", "D3", "J1", "J3", "J4"];
const K = ({ k, c = ":" }) => <DKey>(<u>{k}</u>){c}</DKey>;
const Entry = ({ id, label, k, value, mb }) => (
  <div>
    <Label htmlFor={id} $mb={mb}>{label ? <>{label}<K k={k} /></> : <><u>{k}</u>:</>}</Label>
    <Field id={id} defaultValue={value} />
  </div>
);

export default function App() {
  return (
    <App_>
      <Global />
      <TitleBar>
        <Logo />
        <TitleText>C:\Users\Administrator\Desktop\PADS\STM32L151\STM32L151* - PADS Layout</TitleText>
        <WinButtons>
          <Bare aria-label="minimize"><svg width="11" height="11"><path d="M0 5.500h10" stroke="#888" /></svg></Bare>
          <Bare aria-label="restore"><svg width="11" height="11" fill="none" stroke="#888"><path d="M.5 2.500h7v7h-7zM2.500 2V.5h7v7H8" /></svg></Bare>
          <Bare $w={18} aria-label="close"><svg width="11" height="11"><path d="M.5.500l10 10M10.500.500l-10 10" stroke="#888" /></svg></Bare>
        </WinButtons>
      </TitleBar>
      <MenuBar>
        <Grip $gap={9} />
        {menus.map(([t, k]) => <MenuItem key={k} type="button">{t}<Key>(<u>{k}</u>)</Key></MenuItem>)}
      </MenuBar>
      <ToolBar $mb={1} $pr={1}>
        <Grip $gap={4} />
        <Tool n="open" /><Tool n="save" /><Sep />
        <SelectBox $w="149px">
          <Select aria-label="layer" defaultValue="top"><option value="top">(H) Top</option></Select><Chevron />
        </SelectBox>
        <Sep /><Tool n="props" /><Tool n="cycle" /><Sep /><Tool n="gear1" /><Tool n="gear2" /><Sep />
        <Tool n="shapes" on /><Tool n="dots" /><Tool n="ratsnest" /><Tool n="link" /><Tool n="chip" /><Sep />
        <Tool n="undo" /><Tool n="redo" /><Sep /><Tool n="zoom" /><Sep />
        <Tool n="find" /><Tool n="flip" /><Tool n="brush" /><Sep />
        <Tool n="hammer" on /><Tool n="windows" on /><Sep /><Tool n="q" /><Sep /><Tool n="waves" />
      </ToolBar>
      <ToolBar>
        <Grip $gap={3} />
        <Tool n="arrow" on />
        {["poly", "copper", "copper2", "sel", "ban"].map((n) => <Tool key={n} n={n} />)}
        <ToolBtn type="button" $down><AbTool>ab<i>|</i></AbTool></ToolBtn>
        {["plane", "books", "flood", "hatch", "area", "conn", "nudge", "dxf", "list"].map((n) => <Tool key={n} n={n} />)}
      </ToolBar>

      <Work>
        <Side>
          <PanelHead><PanelTitle>项目浏览器</PanelTitle><HeadIcons close /></PanelHead>
          <TreeFrame>
            <TreeInner>
              <Tree>
                <Row><Expander aria-label="collapse"><Node root /></Expander><ChipIcon big /><Caption $ml={4} $fs={12}>元器件</Caption></Row>
                {parts.map((p) => (
                  <Row key={p}><Expander aria-label={`expand ${p}`}><Node /></Expander><ChipIcon /><Caption $ml={6} $fs={13}>{p}</Caption></Row>
                ))}
              </Tree>
              <VScroll><Arrow /><VThumb /><Arrow r={180} /></VScroll>
            </TreeInner>
          </TreeFrame>
          <Tab type="button">
            <svg width="16" height="14" fill="none" stroke="#000"><path d="M1 2h6v6H1z" fill="#00f" /><path d="M8 5h3v7h2M11 6l3-3m-2 0h2v2m-3 4h3" strokeWidth="1.300" /><path d="M12 8l3 2M12 12l3 1" stroke="#088" /></svg>
            项目
          </Tab>
        </Side>
        <CanvasPane>
          <CanvasRow><BoardView><Board /></BoardView><EdgeScroll /></CanvasRow>
          <HScroll><Arrow r={-90} /><HTrack><div /></HTrack><Arrow r={90} /></HScroll>
        </CanvasPane>
      </Work>
      <PanelHead $h={14} as="footer"><PanelTitle>输出窗口</PanelTitle><HeadIcons /></PanelHead>

      <Dialog role="dialog" aria-labelledby="dlg-title">
        <DialogHead>
          <Logo /><DialogTitle id="dlg-title">添加自由文本</DialogTitle>
          <Bare aria-label="close"><svg width="11" height="11"><path d="M.5.500l10 10M10.500.500l-10 10" stroke="#000" strokeWidth="1.100" /></svg></Bare>
        </DialogHead>
        <Form onSubmit={(e) => e.preventDefault()}>
          <Label htmlFor="txt" $mb={3}>文本<K k="T" /></Label>
          <Gap $b={6}><Field id="txt" $focus defaultValue="stm32" /></Gap>
          <Label htmlFor="font" $mb={0}>字体<K k="F" /></Label>
          <FontRow>
            <SelectBox $w="195px">
              <Select id="font" $white $h={22} $fs={13} $ff={`"Liberation Mono", monospace`}><option>&lt;Romansim Stroke Font&gt;</option></Select><Chevron />
            </SelectBox>
            <StyleBtns>
              <StyleBtn type="button">B</StyleBtn><StyleBtn type="button" $i>I</StyleBtn><StyleBtn type="button" $u>U</StyleBtn>
            </StyleBtns>
          </FontRow>
          <Label htmlFor="lay" $mb={2}>层<K k="E" /></Label>
          <Gap $b={5}><SelectBox><Select id="lay" $fs={11}><option>Silkscreen Top</option></Select><Chevron /></SelectBox></Gap>
          <Group $pad="3px 9px 7px 6px">
            <Legend>位置和尺寸</Legend>
            <Grid $cols="repeat(3, 1fr)" $g={24}>
              <Entry id="x" k="X" mb={3} />
              <Entry id="y" k="Y" mb={3} />
              <Entry id="rot" label="旋转" k="R" value="0.000" mb={3} />
              <Entry id="size" label="尺寸" k="S" value="100" mb={2} />
              <Entry id="lw" label="线宽" k="L" value="10" mb={2} />
              <Check><Tick type="checkbox" /><span>已镜像<K k="M" c="" /></span></Check>
            </Grid>
          </Group>
          <AlignRow>
            <Group $pad="1px 9px 5px 6px" $w="185px">
              <Legend>对齐</Legend>
              <Grid $cols="75px 75px" $g={18}>
                <div><Label htmlFor="ha" $mb={2}>水平<K k="H" c="" /></Label><SelectBox><Select id="ha"><option>左</option></Select><Chevron /></SelectBox></div>
                <div><Label htmlFor="va" $mb={2}>垂直<K k="V" c="" /></Label><SelectBox><Select id="va"><option>下</option></Select><Chevron /></SelectBox></div>
              </Grid>
            </Group>
            <DlgBtn type="button" $mb={5}>默认值</DlgBtn>
          </AlignRow>
          <Clearance>安全间距:<span>6</span></Clearance>
          <Footer><DlgBtn $def>确定</DlgBtn><DlgBtn type="button">取消</DlgBtn><DlgBtn type="button">帮助<K k="H" c="" /></DlgBtn></Footer>
        </Form>
        <RedBox $x={-17} $y={20} $w={109} $h={60} />
        <RedBox $x={2} $y={207} $w={194} $h={57} />
      </Dialog>
      <RedBox $x={139} $y={62} $w={34} $h={59} />
      <Watermark>CSDN @Drive World</Watermark>
    </App_>
  );
}
